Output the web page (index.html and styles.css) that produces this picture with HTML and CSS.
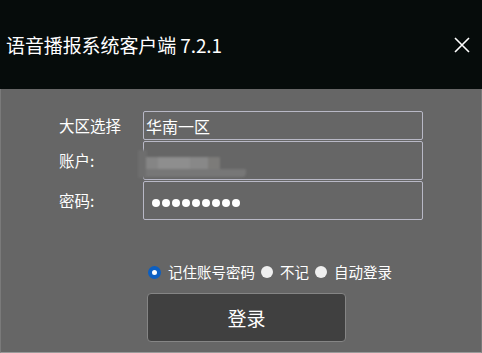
FILE: index.html
```html
<!DOCTYPE html>
<html lang="zh">
<head>
<meta charset="utf-8">
<link rel="stylesheet" href="styles.css">
</head>
<body>
<div class="window">
  <header class="titlebar">
    <span class="title">语音播报系统客户端 7.2.1</span>
    <svg class="close" width="16" height="16" viewBox="0 0 16 16"><path d="M1 1L15 15M15 1L1 15" stroke="#fff" stroke-width="1.6" fill="none"/></svg>
  </header>
  <main class="body">
    <div class="form">
      <label class="lbl">大区选择</label>
      <div class="box box-sm"><span class="val">华南一区</span></div>
      <label class="lbl">账户:</label>
      <div class="box box-lg">
        <div class="blur">
          <span class="b b1"></span><span class="b b2"></span><span class="b b3"></span><span class="b b4"></span><span class="b b5"></span>
          <span class="streak"></span>
        </div>
      </div>
      <label class="lbl">密码:</label>
      <div class="box box-lg">
        <div class="dots"><i></i><i></i><i></i><i></i><i></i><i></i><i></i><i></i><i></i></div>
      </div>
    </div>
    <div class="options">
      <span class="opt"><span class="radio on"></span>记住账号密码</span>
      <span class="opt"><span class="radio"></span>不记</span>
      <span class="opt"><span class="radio"></span>自动登录</span>
    </div>
    <button class="login">登录</button>
  </main>
</div>
</body>
</html>
```

FILE: styles.css
```css
* { box-sizing: border-box; }
html, body { margin: 0; padding: 0; }
body {
  width: 482px;
  height: 353px;
  overflow: hidden;
  font-family: "Noto Sans CJK SC", "Noto Sans", sans-serif;
  color: #fff;
  background: #666;
}
.window { width: 482px; height: 353px; display: flex; flex-direction: column; }
.titlebar {
  height: 89px;
  background: #060c0b;
  display: flex;
  align-items: center;
  justify-content: space-between;
  padding: 0 12px 0 6px;
}
.title { font-size: 19px; line-height: 1; letter-spacing: -0.1px; }
.close { margin-top: 0px; }
.body {
  flex: 1;
  background: #666;
  border-left: 1px solid #7a7a7a;
  border-right: 1px solid #7a7a7a;
  border-bottom: 1px solid #9a9a9a;
  padding: 22px 0 0 58px;
  display: flex;
  flex-direction: column;
}
.form {
  display: grid;
  grid-template-columns: 84px 280px;
  row-gap: 1px;
  align-items: center;
}
.lbl { font-size: 15.5px; line-height: 1; }
.box {
  border: 1px solid #b8b8c6;
  border-radius: 2px;
  display: flex;
  align-items: center;
  position: relative;
}
.box-sm { height: 29px; }
.box-lg { height: 39px; }
.val { font-size: 16px; padding-left: 2px; line-height: 1; }
.blur { position: relative; width: 100%; height: 100%; filter: blur(1px); }
.b { position: absolute; top: 15px; height: 12px; }
.b1 { left: -6px; width: 9px; top: 8px; height: 28px; background: #6e6e6e; }
.b2 { left: 2px; width: 12px; background: #858585; }
.b3 { left: 14px; width: 32px; background: #8e8e8e; }
.b4 { left: 46px; width: 18px; background: #888; }
.b5 { left: 64px; width: 12px; background: #7c7b79; }
.streak { position: absolute; left: 2px; top: 27px; width: 100px; height: 8px; background: #777; border-radius: 0 0 4px 0; }
.dots { display: flex; gap: 2px; padding-left: 8px; margin-top: 5px; }
.dots i { width: 8px; height: 8px; border-radius: 50%; background: #fff; }
.options {
  display: flex;
  align-items: center;
  margin-top: 45px;
  margin-left: 89px;
  font-size: 14.5px;
  line-height: 1;
  gap: 6px;
}
.opt { display: flex; align-items: center; gap: 7px; }
.radio { width: 12px; height: 12px; border-radius: 50%; background: #efefef; }
.radio.on { width: 13px; height: 13px; background: #fff; border: 4px solid #0c5fc2; }
.login {
  margin-top: 13px;
  margin-left: 88px;
  width: 199px;
  height: 49px;
  background: #404040;
  border: 1px solid #858585;
  border-radius: 4px;
  color: #fff;
  font-family: inherit;
  font-size: 19px;
  padding: 0;
}
```
